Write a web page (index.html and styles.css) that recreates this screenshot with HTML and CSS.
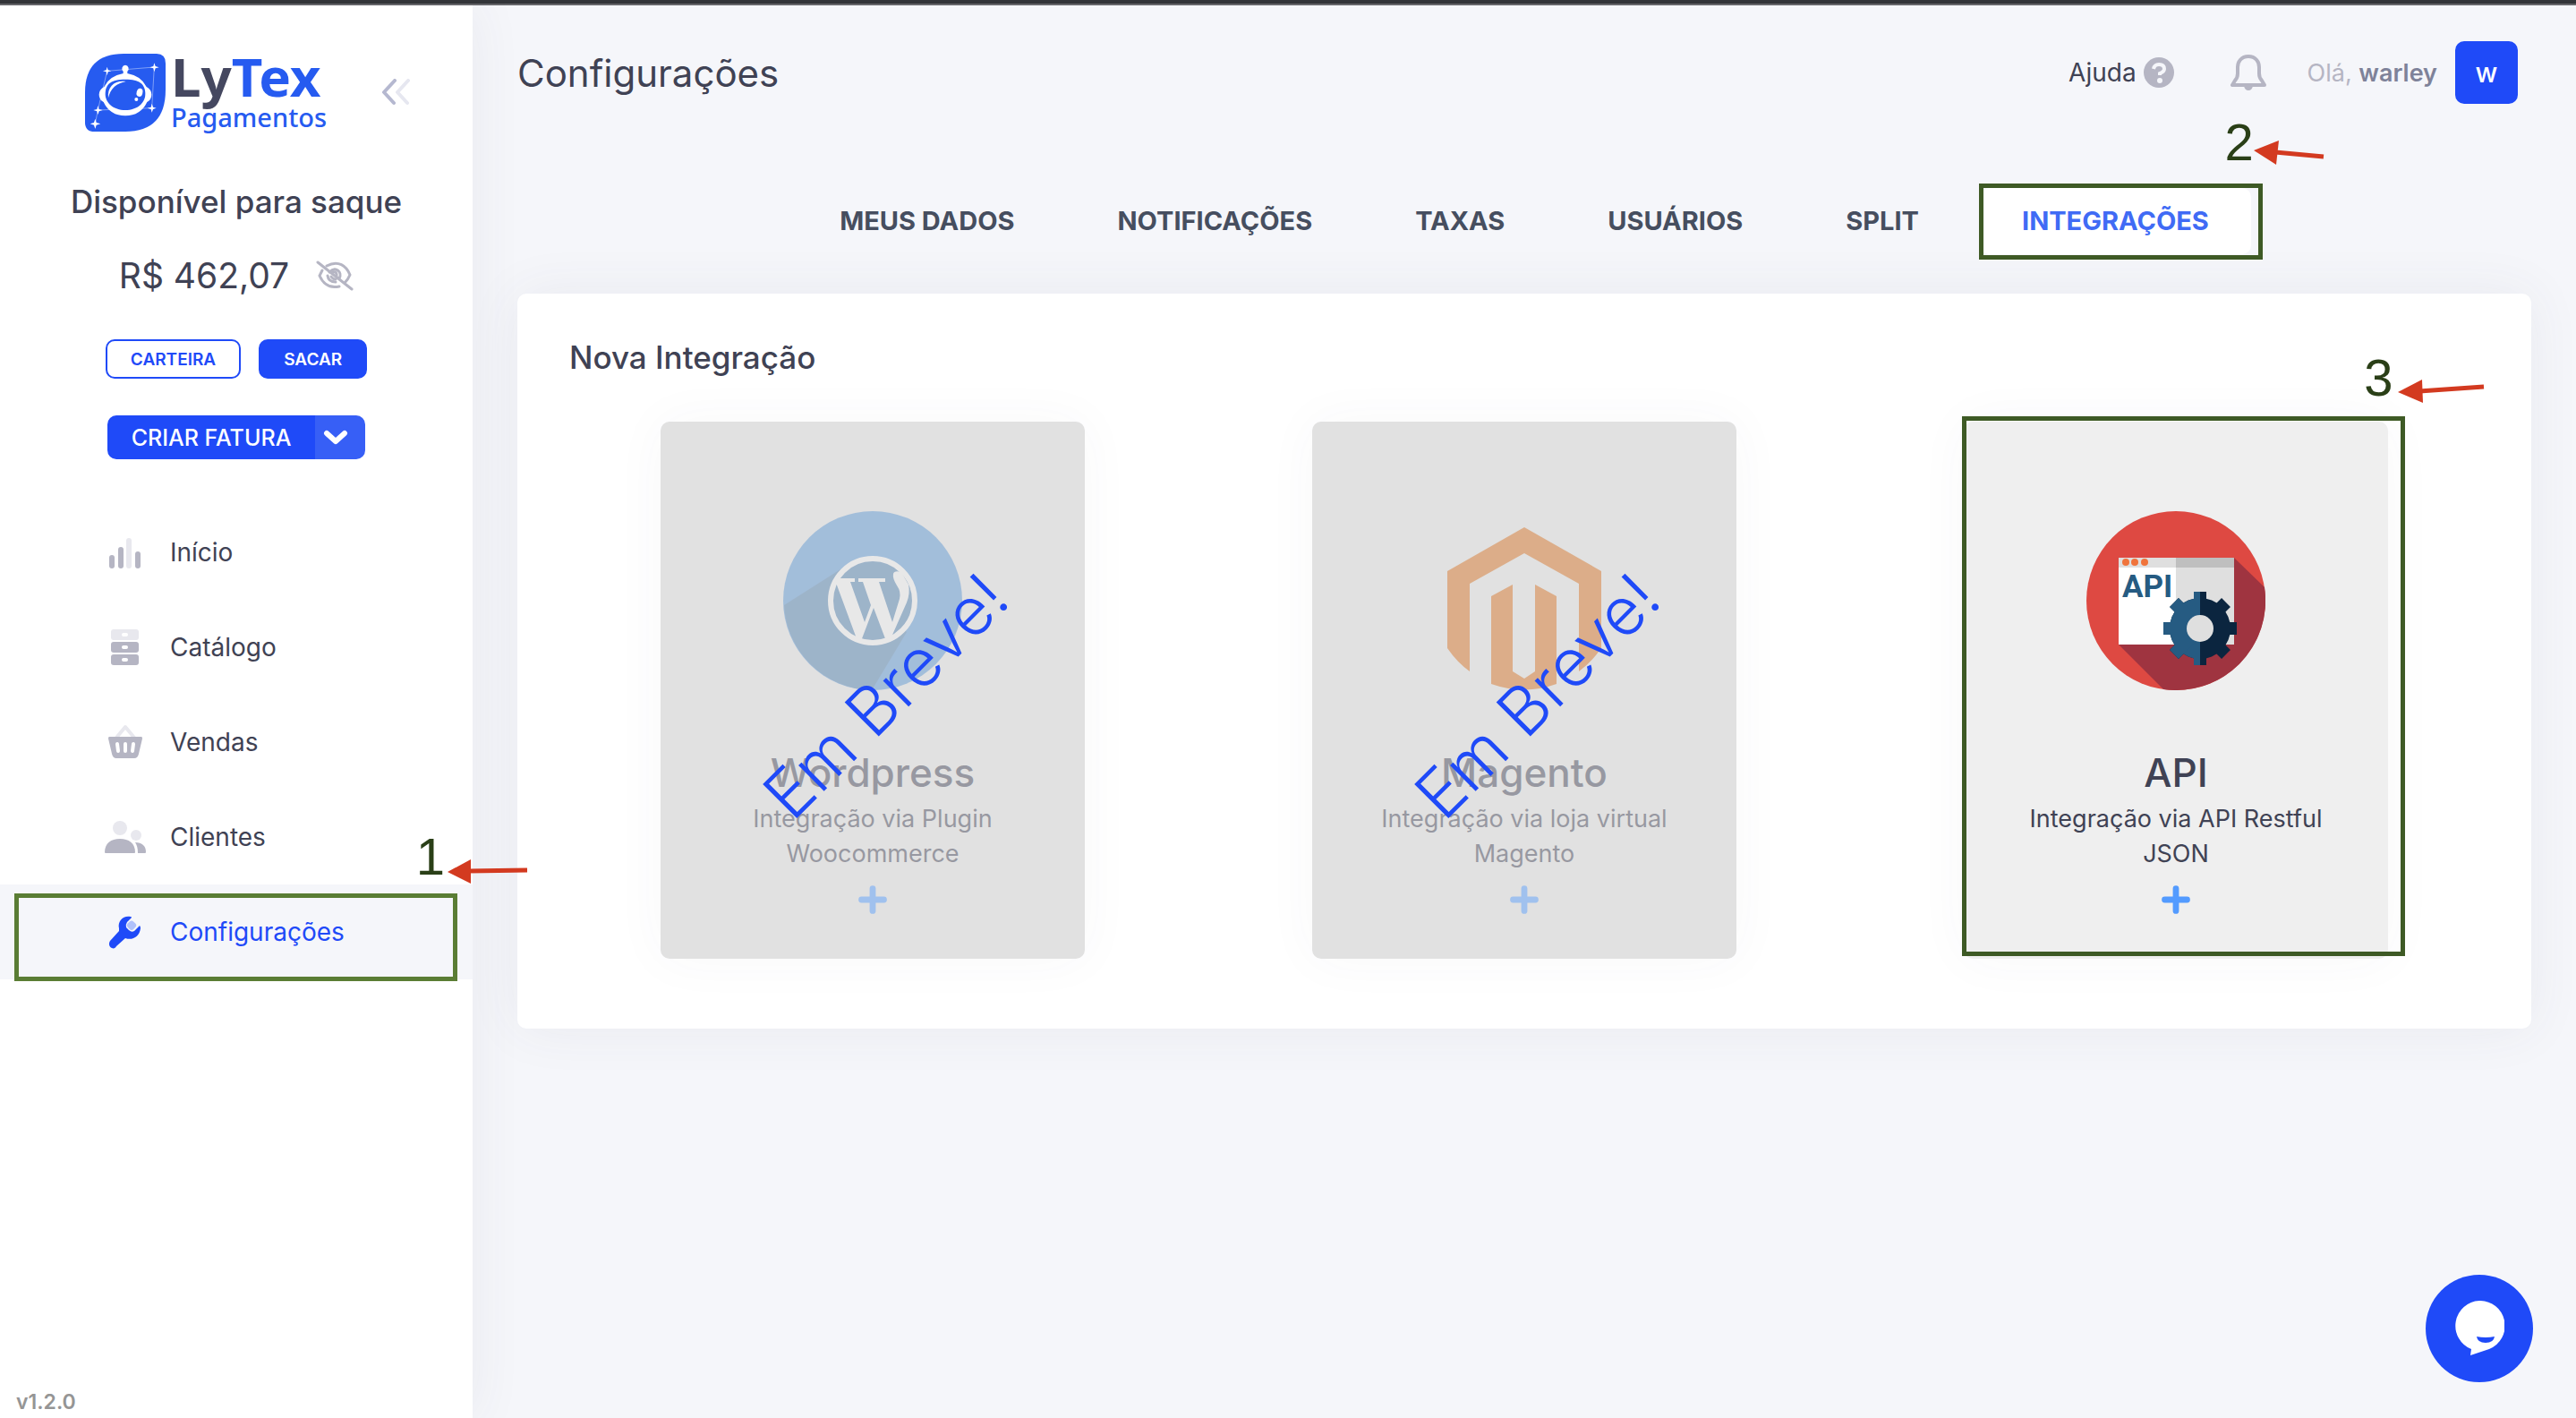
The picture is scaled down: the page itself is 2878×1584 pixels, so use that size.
FILE: index.html
```html
<!DOCTYPE html>
<html lang="pt-BR">
<head>
<meta charset="utf-8">
<meta name="viewport" content="width=device-width, initial-scale=1">
<title>Configurações - LyTex Pagamentos</title>
<link rel="stylesheet" href="styles.css">
</head>
<body>
<div class="app">
  <aside class="sidebar">
    <div class="brand">
      <a class="logo" href="#">
        <svg class="logo-mark" viewBox="0 0 270 261" aria-hidden="true">
          <path fill="#265bf0" d="M130 0H240Q270 0 270 32V120Q270 261 135 261H32Q0 261 0 230V130Q0 0 130 0Z"/>
          <path d="M74 58L232 45L224 182L43 189L34 235M74 58L43 189" fill="none" stroke="#7f9ff7" stroke-width="3"/>
          <path fill="#fff" d="M135 38a12 12 0 0 1 7 21v7q46 8 64 45q17 10 17 26t-15 25q-22 46-73 46t-73-46q-15-9-15-25t17-26q18-37 64-45v-7a12 12 0 0 1 7-21Z"/>
          <path fill="#265bf0" d="M135 86c48 0 67 16 67 49c0 30-27 54-67 54s-67-24-67-54c0-33 19-49 67-49Z"/>
          <path fill="#fff" d="M78 148C74 110 100 88 137 93C106 99 86 115 78 148Z"/>
          <ellipse cx="183" cy="130" rx="10" ry="14" fill="#fff" transform="rotate(14 183 130)"/>
          <circle cx="172" cy="153" r="6" fill="#fff"/>
          <path fill="#fff" d="M74 44l3 11 11 3-11 3-3 12-3-12-11-3 11-3zM232 31l4 11 12 4-12 3-4 12-3-12-12-3 12-4zM43 174l4 12 12 3-12 4-4 11-3-11-12-4 12-3zM224 167l4 12 11 3-11 4-4 11-3-11-12-4 12-3zM34 218l4 13 14 4-14 4-4 13-4-13-13-4 13-4z"/>
        </svg>
        <span class="logo-text">
          <span class="logo-name"><span class="logo-dark">Ly</span>Tex</span>
          <span class="logo-sub">Pagamentos</span>
        </span>
      </a>
      <button class="icon-button collapse" type="button" aria-label="Recolher menu">
        <svg width="34" height="30" viewBox="0 0 34 30" fill="none" stroke-width="4" stroke-linecap="round" stroke-linejoin="round" aria-hidden="true">
          <path stroke="#e6e7f0" d="M30 2L18 15L29 27"/><path stroke="#b5b8d0" d="M15 2L3 15L14 27"/>
        </svg>
      </button>
    </div>

    <section class="balance">
      <h2 class="balance-title">Disponível para saque</h2>
      <div class="balance-row">
        <span class="balance-value">R$ 462,07</span>
        <button class="icon-button" type="button" aria-label="Ocultar saldo">
          <svg width="42" height="34" viewBox="0 0 42 34" fill="none" stroke="#b5b5c3" stroke-width="3" stroke-linecap="round" aria-hidden="true">
            <path d="M12 6C25-1 34 6 38 16Q36 21 32 25M7 11L4 17C9 28 17 31 26 29"/>
            <path d="M15 13C22 6 30 13 26 20M13 17Q14 24 22 24"/><path d="M19 13q5-1 4 5M17 18q2 3 5 3"/>
            <path d="M2 2L40 32"/>
          </svg>
        </button>
      </div>
      <div class="balance-actions">
        <button class="btn btn-outline" type="button">CARTEIRA</button>
        <button class="btn btn-primary" type="button">SACAR</button>
      </div>
      <div class="split-button">
        <button class="split-main" type="button">CRIAR FATURA</button>
        <button class="split-toggle" type="button" aria-label="Mais opções">
          <svg width="28" height="18" viewBox="0 0 28 18" fill="none" stroke="#fff" stroke-width="6" stroke-linecap="round" stroke-linejoin="round" aria-hidden="true"><path d="M4 4L14 13L24 4"/></svg>
        </button>
      </div>
    </section>

    <nav class="menu" aria-label="Menu principal">
      <a class="menu-item" href="#">
        <svg class="menu-icon" viewBox="0 0 48 48" aria-hidden="true"><g fill="#b5b5c3"><rect x="6" y="27" width="6" height="15" rx="3"/><rect x="16" y="18" width="6" height="24" rx="3"/><rect x="35" y="23" width="6" height="19" rx="3"/></g><rect x="25" y="8" width="6" height="34" rx="3" fill="#e8e8ee"/></svg>
        Início
      </a>
      <a class="menu-item" href="#">
        <svg class="menu-icon" viewBox="0 0 48 48" aria-hidden="true"><rect x="8" y="4" width="31" height="12" rx="3" fill="#e8e8ee"/><g fill="#b5b5c3"><rect x="8" y="18" width="31" height="12" rx="3"/><rect x="8" y="32" width="31" height="12" rx="3"/></g><g fill="#fff"><rect x="20" y="8" width="7" height="4" rx="2"/><rect x="20" y="22" width="7" height="4" rx="2"/><rect x="20" y="36" width="7" height="4" rx="2"/></g></svg>
        Catálogo
      </a>
      <a class="menu-item" href="#">
        <svg class="menu-icon" viewBox="0 0 48 48" aria-hidden="true"><path d="M14 19L24 7L34 19" fill="none" stroke="#e8e8ee" stroke-width="4" stroke-linejoin="round"/><path fill="#b5b5c3" d="M6 18H42Q43 18 43 20L39 37Q38 42 34 42H14Q10 42 9 37L5 20Q5 18 6 18Z"/><path stroke="#fff" stroke-width="4" stroke-linecap="round" d="M15 26L16 34M24 26V34M33 26L32 34"/></svg>
        Vendas
      </a>
      <a class="menu-item" href="#">
        <svg class="menu-icon" viewBox="0 0 48 48" aria-hidden="true"><g fill="#e8e8ee"><circle cx="18" cy="14" r="8"/><circle cx="36" cy="22" r="6"/></g><g fill="#b5b5c3"><path d="M1 41C1 31 8 26 18 26S35 31 35 41Q35 42 34 42H2Q1 42 1 41Z"/><path d="M35 30C43 30 47 34 47 41Q47 42 46 42H38Q38 34 35 30Z"/></g></svg>
        Clientes
      </a>
      <a class="menu-item active" href="#" aria-current="page">
        <svg class="menu-icon" viewBox="0 0 48 48" aria-hidden="true"><path fill="#1f4af8" d="M30 7C22 5 15 12 17 20V23L7 34C5 37 6 41 9 42C11 43 13 42 14 40L24 31C32 34 40 29 41 20Q41 18 40 17L34 23Q31 25 28 22L25 19Q24 16 26 13L31 8Q31 7 30 7Z"/><rect x="27" y="12" width="9" height="9" rx="3" transform="rotate(45 31 16)" fill="#b0c1fb"/></svg>
        Configurações
      </a>
      <div class="outline outline-menu"></div>
      <div class="mark mark-1">1</div>
      <svg class="arrow arrow-1" viewBox="0 0 90 30" aria-hidden="true"><path d="M24 15L89 14" stroke="#d33a20" stroke-width="5"/><path d="M0 16L26 2V29Z" fill="#d33a20"/></svg>
    </nav>
    <div class="version">v1.2.0</div>
  </aside>

  <main class="content">
    <header class="topbar">
      <h1 class="page-title">Configurações</h1>
      <div class="topbar-tools">
        <a class="help" href="#">Ajuda
          <svg width="34" height="34" viewBox="0 0 34 34" aria-hidden="true"><circle cx="17" cy="17" r="17" fill="#b5b5c3"/><path d="M11 13Q12 8 17 8Q23 8 23 13Q23 16 18 18V20" fill="none" stroke="#f5f6fa" stroke-width="4"/><circle cx="18" cy="26" r="3" fill="#f5f6fa"/></svg>
        </a>
        <button class="icon-button bell" type="button" aria-label="Notificações">
          <svg width="40" height="40" viewBox="0 0 40 40" aria-hidden="true"><path d="M20 2C12 2 8 8 8 14V21Q8 26 5 29L2 34H38L35 29Q32 26 32 21V14C32 8 28 2 20 2Z" fill="none" stroke="#b5b5c3" stroke-width="4" stroke-linejoin="round"/><path d="M15 35H25Q24 40 20 40T15 35Z" fill="#b5b5c3"/></svg>
        </button>
        <div class="user">
          <span class="greeting">Olá, <strong>warley</strong></span>
          <button class="avatar" type="button">w</button>
        </div>
      </div>
    </header>

    <nav class="tabs" aria-label="Seções">
      <a class="tab" href="#">MEUS DADOS</a>
      <a class="tab" href="#">NOTIFICAÇÕES</a>
      <a class="tab" href="#">TAXAS</a>
      <a class="tab" href="#">USUÁRIOS</a>
      <a class="tab" href="#">SPLIT</a>
      <a class="tab selected" href="#" aria-current="true">INTEGRAÇÕES
        <span class="outline outline-tab"></span>
        <span class="mark mark-2">2</span>
        <svg class="arrow arrow-2" viewBox="0 0 80 30" aria-hidden="true"><path d="M24 14L78 19" stroke="#d33a20" stroke-width="5"/><path d="M0 12L28 1L25 28Z" fill="#d33a20"/></svg>
      </a>
    </nav>

    <section class="panel">
      <h2 class="panel-title">Nova Integração</h2>
      <div class="cards">
        <article class="card disabled">
          <div class="card-body">
            <svg class="card-logo" viewBox="0 0 200 200" aria-hidden="true">
              <circle cx="100" cy="100" r="100" fill="#5894d2"/>
              <path d="M1 105L64 65L138 135L99 200A100 100 0 0 1 1 105Z" fill="#4d7eae"/>
              <circle cx="100" cy="100" r="47" fill="#4d7eae" stroke="#f2f2f2" stroke-width="6"/>
              <path fill="#f2f2f2" d="M59 75H80V79H75L91 124L98 105L89 79H84V75H114V79H107L122 124L130 98Q132 90 127 83Q122 75 123 70Q124 66 132 68L140 82Q142 92 138 102L119 145H115L101 108L87 145H83L59 80Z"/>
            </svg>
            <h3 class="card-title">Wordpress</h3>
            <p class="card-text">Integração via Plugin Woocommerce</p>
            <svg class="plus" viewBox="0 0 30 30" aria-hidden="true"><path d="M15 4V26M4 15H26" stroke="#539bff" stroke-width="6" stroke-linecap="round"/></svg>
          </div>
          <span class="soon">Em Breve!</span>
        </article>
        <article class="card disabled">
          <div class="card-body">
            <svg class="card-logo" viewBox="0 0 200 200" aria-hidden="true">
              <g fill="#d6701f"><path d="M100 18L186 67V153Q175 169 161 179V81L100 47L39 81V179Q25 169 14 153V67Z"/><path d="M63 95L87 82V179L100 187L112 179V82L136 95V193Q100 206 63 193Z"/></g>
            </svg>
            <h3 class="card-title">Magento</h3>
            <p class="card-text">Integração via loja virtual Magento</p>
            <svg class="plus" viewBox="0 0 30 30" aria-hidden="true"><path d="M15 4V26M4 15H26" stroke="#539bff" stroke-width="6" stroke-linecap="round"/></svg>
          </div>
          <span class="soon">Em Breve!</span>
        </article>
        <article class="card">
          <div class="card-body">
            <svg class="card-logo" viewBox="0 0 200 200" aria-hidden="true">
              <circle cx="100" cy="100" r="100" fill="#de4942"/>
              <path d="M165 52L199 85A100 100 0 0 1 86 199L36 149Z" fill="#9f3440"/>
              <path fill="#fff" d="M36 52H100V149H36Z"/><path fill="#dfdfdf" d="M100 52H165V149H100ZM36 52H100V63H36Z"/><path fill="#bfbfbf" d="M100 52H165V63H100Z"/>
              <g fill="#f0743c"><circle cx="44" cy="57" r="4"/><circle cx="54" cy="57" r="4"/><circle cx="65" cy="57" r="4"/></g>
              <text class="api-label" x="40" y="96" fill="#265b82">API</text>
              <g transform="translate(127 131)">
                <g fill="#0b253f"><circle r="34"/><path d="M-7-41H7V41H-7ZM-41-7H41V7H-41Z"/><path d="M-7-41H7V41H-7ZM-41-7H41V7H-41Z" transform="rotate(45)"/></g>
                <clipPath id="left-half"><rect x="-42" y="-42" width="42" height="84"/></clipPath>
                <g clip-path="url(#left-half)" fill="#265b82"><circle r="34"/><path d="M-7-41H7V41H-7ZM-41-7H41V7H-41Z"/><path d="M-7-41H7V41H-7ZM-41-7H41V7H-41Z" transform="rotate(45)"/></g>
                <circle r="15" fill="#dfdfdf"/>
              </g>
            </svg>
            <h3 class="card-title">API</h3>
            <p class="card-text">Integração via API Restful JSON</p>
            <svg class="plus" viewBox="0 0 30 30" aria-hidden="true"><path d="M15 4V26M4 15H26" stroke="#539bff" stroke-width="6" stroke-linecap="round"/></svg>
          </div>
          <div class="outline outline-card"></div>
          <div class="mark mark-3">3</div>
          <svg class="arrow arrow-3" viewBox="0 0 98 30" aria-hidden="true"><path d="M24 16L96 11" stroke="#d33a20" stroke-width="5"/><path d="M0 17L27 3L28 29Z" fill="#d33a20"/></svg>
        </article>
      </div>
    </section>
  </main>
</div>
<button class="chat" type="button" aria-label="Abrir chat">
  <svg width="56" height="62" viewBox="0 0 56 62" aria-hidden="true"><path fill="#fff" d="M28 0A28 28 0 0 1 39 54L18 61L19 54A28 28 0 0 1 28 0Z"/><path fill="#1f4af8" d="M25 40Q35 42 45 40Q44 47 35 47T25 40Z"/></svg>
</button>
</body>
</html>
```
FILE: styles.css
```css
* { box-sizing: border-box; }

body {
  margin: 0;
  border-top: 4px solid #333539;
  background: #f5f6fa;
  color: #3f4254;
  font-family: Inter, "Open Sans", sans-serif;
  font-size: 27px;
}

h1, h2, h3, p { margin: 0; font-weight: 400; }
a { color: inherit; text-decoration: none; }
button { margin: 0; padding: 0; border: 0; background: none; color: inherit; font: inherit; cursor: pointer; }
svg { display: block; }

.app {
  display: flex;
  min-height: calc(100vh - 4px);
  border-top: 2px solid #66666a;
}

/* Sidebar */
.sidebar {
  position: relative;
  z-index: 1;
  display: flex;
  flex: 0 0 528px;
  flex-direction: column;
  background: #fff;
  box-shadow: 0 0 56px rgba(70, 72, 100, 0.07);
}

.brand {
  display: flex;
  align-items: center;
  justify-content: space-between;
  height: 92px;
  margin: 51px 68px 0 95px;
}
.logo { display: flex; align-items: center; gap: 6px; }
.logo-mark { width: 90px; height: 87px; }
.logo-text { display: flex; flex-direction: column; color: #265bf0; font-family: "Noto Sans", sans-serif; }
.logo-name { font-size: 60px; font-weight: 700; line-height: 56px; }
.logo-dark { color: #454860; }
.logo-sub { font-size: 29px; font-weight: 500; line-height: 36px; }

.balance { display: flex; flex-direction: column; align-items: center; padding-top: 52px; }
.balance-title { font-size: 35px; font-weight: 500; line-height: 48px; }
.balance-row { display: flex; align-items: center; gap: 30px; margin-top: 29px; }
.balance-value { font-size: 39px; line-height: 60px; }
.balance-actions { display: flex; gap: 20px; margin-top: 41px; }
.btn {
  height: 44px;
  padding: 0 26px;
  border: 2px solid #1f4af8;
  border-radius: 10px;
  font-size: 19px;
  font-weight: 600;
}
.btn-outline { color: #1f4af8; }
.btn-primary { background: #1f4af8; color: #fff; }
.split-button { display: flex; height: 49px; margin-top: 41px; overflow: hidden; border-radius: 10px; color: #fff; }
.split-main { padding: 0 27px; background: #1f4af8; font-size: 25px; font-weight: 500; }
.split-toggle { display: grid; width: 56px; padding-right: 10px; place-items: center; background: #375ff6; }

.menu { position: relative; display: flex; flex-direction: column; margin-top: 51px; }
.menu-item { display: flex; align-items: center; gap: 26px; height: 106px; padding-left: 116px; font-size: 28px; }
.menu-icon { width: 48px; height: 48px; }
.menu-item.active { background: #f5f6fa; color: #1f4af8; }
.version { margin-top: auto; padding: 0 18px 4px; color: #959595; font-size: 23px; font-weight: 600; line-height: 28px; }

/* Content */
.content { flex: 1; min-width: 0; padding: 0 50px; }

.topbar { display: flex; align-items: center; justify-content: space-between; height: 150px; padding-right: 15px; }
.page-title { font-size: 42px; }
.topbar-tools { display: flex; align-items: center; }
.help { display: flex; align-items: center; gap: 8px; font-size: 28px; }
.bell { margin: 0 46px 0 63px; }
.user { display: flex; align-items: center; gap: 20px; }
.greeting { color: #b5b5c3; }
.greeting strong { color: #7e8299; font-weight: 600; }
.avatar { width: 70px; height: 70px; border-radius: 10px; background: #1f4af8; color: #fff; font-size: 30px; font-weight: 500; }

.tabs { display: flex; justify-content: center; gap: 21px; margin-top: 54px; }
.tab {
  position: relative;
  padding: 0 47px;
  border-radius: 10px;
  color: #464e5f;
  font-size: 29px;
  font-weight: 700;
  line-height: 74px;
}
.tab.selected { background: #fff; color: #406bf5; }

.panel {
  margin-top: 44px;
  padding: 47px 33px 78px;
  border-radius: 10px;
  background: #fff;
  box-shadow: 0 0 60px rgba(70, 72, 100, 0.07);
}
.panel-title { padding-left: 25px; font-size: 35px; font-weight: 500; line-height: 48px; }
.cards { display: grid; grid-template-columns: repeat(3, 1fr); justify-items: center; margin-top: 48px; }
.card {
  position: relative;
  width: 65%;
  min-height: 600px;
  border-radius: 10px;
  background: #efefef;
  box-shadow: 0 0 60px rgba(70, 72, 100, 0.04);
}
.card.disabled { background: #e1e1e1; }
.card-body { display: flex; flex-direction: column; align-items: center; padding: 100px 56px 48px; text-align: center; }
.disabled .card-body { opacity: 0.45; }
.card-logo { width: 200px; height: 200px; }
.api-label { font-family: Roboto, sans-serif; font-size: 35px; font-weight: 700; }
.card-title { margin-top: 64px; font-size: 44px; font-weight: 500; line-height: 56px; }
.card-text { margin-top: 4px; line-height: 39px; }
.plus { width: 34px; height: 34px; margin-top: 15px; }
.soon {
  position: absolute;
  top: 51%;
  left: 53%;
  color: #1f4af8;
  font-size: 74px;
  font-weight: 300;
  line-height: 72px;
  white-space: nowrap;
  transform: translate(-50%, -50%) rotate(-45deg);
}

/* Step annotations laid over the page */
.outline { position: absolute; border: 5px solid #3e5a25; pointer-events: none; }
.mark { position: absolute; color: #2a3f17; font: 400 58px/58px "Liberation Sans", sans-serif; }
.arrow { position: absolute; height: 30px; }
.outline-menu { right: 17px; bottom: -2px; left: 16px; height: 98px; border-color: #5a7d34; }
.mark-1 { right: 31px; bottom: 108px; }
.arrow-1 { right: -62px; bottom: 106px; width: 90px; }
.outline-tab { inset: -5px -13px -6px -1px; }
.mark-2 { right: -3px; bottom: 96px; }
.arrow-2 { right: -83px; bottom: 98px; width: 80px; }
.outline-card { inset: -6px -19px 3px -2px; }
.mark-3 { top: -78px; right: -6px; }
.arrow-3 { top: -50px; right: -109px; width: 98px; }

.chat {
  position: fixed;
  right: 48px;
  bottom: 40px;
  display: grid;
  width: 120px;
  height: 120px;
  place-items: center;
  border-radius: 50%;
  background: #1f4af8;
}
```
